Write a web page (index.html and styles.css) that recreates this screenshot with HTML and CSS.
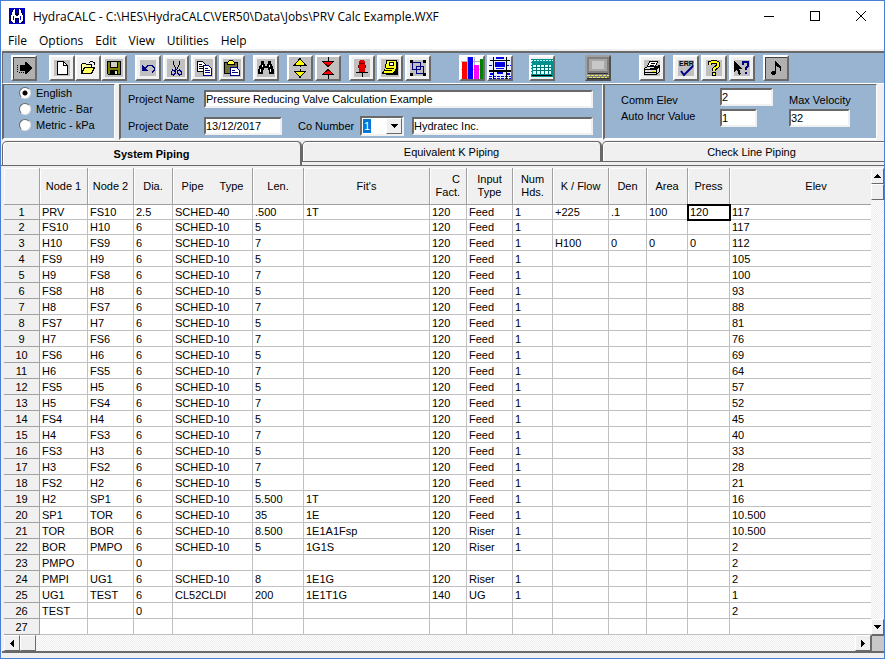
FILE: index.html
```html
<!DOCTYPE html>
<html lang="en">
<head>
    <meta charset="UTF-8">
    <meta name="viewport" content="width=device-width, initial-scale=1.0">
    <title>HydraCALC</title>
    <link rel="stylesheet" href="styles.css">
</head>
<body>
<div class="window">
    <header class="titlebar">
        <svg class="app-icon" viewBox="0 0 16 16"><path fill="#0000c8" d="M0 0h16v16H0z"/><path fill="#000040" d="M4 1h3v4h2V1h3l3 7v5l-2 2H9v-4H7v4H3l-2-2V8z"/><path fill="#fff" d="M5 1h1v5l1 2h2l1-2V1h1l3 7v4l-2 3h-2v-5H6v5H4l-2-3V8z"/><path fill="#0000c8" d="M4 8h1v4H4zM11 8h1v4h-1z"/></svg>
        <span class="title">HydraCALC - C:\HES\HydraCALC\VER50\Data\Jobs\PRV Calc Example.WXF</span>
        <div class="window-buttons">
            <button type="button" aria-label="Minimize"><svg viewBox="0 0 10 10"><path d="M0 5.500h10"/></svg></button>
            <button type="button" aria-label="Maximize"><svg viewBox="0 0 10 10"><path d="M.5.5h9v9h-9z"/></svg></button>
            <button type="button" aria-label="Close"><svg class="smooth" viewBox="0 0 10 10"><path d="M0 0l10 10M10 0L0 10"/></svg></button>
        </div>
    </header>

    <nav class="menu">
        <a href="#">File</a>
        <a href="#">Options</a>
        <a href="#">Edit</a>
        <a href="#">View</a>
        <a href="#">Utilities</a>
        <a href="#">Help</a>
    </nav>

    <div class="toolbar">
        <div class="group">
            <button type="button" class="dark" aria-label="Run"><svg viewBox="0 0 18 18"><path d="M5 6h5V3h1l6 6-6 6h-1v-3H5z"/><path d="M2 6h1v1H2zM2 8h1v1H2zM2 10h1v1H2zM2 12h1v1H2zM4 13h1v1H4zM6 13h1v1H6zM8 13h1v1H8z"/></svg></button>
        </div>
        <div class="group tight space-xs">
            <button type="button" aria-label="New"><svg viewBox="0 0 18 18"><path fill="#c0c0c0" d="M1 1h16v16H1z"/><path fill="#fff" stroke="#000" d="M4.500 2.500h6l4 4v9h-10z"/><path fill="none" stroke="#000" d="M10.500 2.500v4h4"/></svg></button>
            <button type="button" aria-label="Open"><svg viewBox="0 0 18 18"><path fill="#ffffa0" stroke="#000" d="M2.500 14.500v-9l1-1h3l1 1h5v3"/><path fill="#ffff60" stroke="#000" d="M2.500 14.500l3-6h10l-3 6z"/><path fill="none" stroke="#000" d="M10 3.500h1M11 2.500h3M14 3.500h2M15.500 3v3"/></svg></button>
            <button type="button" aria-label="Save"><svg viewBox="0 0 18 18"><path fill="#c0c0c0" d="M0 0h18v18H0z"/><path fill="#808000" stroke="#000" d="M2.500 2.500h13v13h-12l-1-1z"/><path fill="#d0d0c0" stroke="#000" d="M5.500 2.500h7v6h-7z"/><path d="M5 11h8v5H5z"/><path fill="#e0e0e0" d="M10 12h2v3h-2z"/></svg></button>
        </div>
        <div class="group">
            <button type="button" aria-label="Undo"><svg viewBox="0 0 18 18"><path fill="#c0c0c0" d="M1 1h16v16H1z"/><path fill="none" stroke="#000080" d="M6 9.500l3-3h4l2 2v3l-2 2"/><path fill="#000080" d="M3 6v6h6z"/></svg></button>
            <button type="button" aria-label="Cut"><svg viewBox="0 0 18 18"><path fill="#c0c0c0" d="M0 0h18v18H0z"/><path fill="none" stroke="#000" d="M6.500 2v3l2 4M12.500 2v3l-3 6"/><path fill="none" stroke="#000080" d="M8.500 9l2 3 2-1 2 2v2l-2 1-2-2v-2M9.500 10l-2 2-2-1-1 2v2l2 1 2-2v-2"/></svg></button>
            <button type="button" aria-label="Copy"><svg viewBox="0 0 18 18"><path fill="#c0c0c0" d="M0 0h18v18H0z"/><path fill="#fff" stroke="#000" d="M2.500 2.500h5l3 3v7h-8z"/><path stroke="#000" d="M4 5.500h3M4 7.500h4M4 9.500h4"/><path fill="#fff" stroke="#000080" d="M8.500 6.500h5l3 3v7h-8z"/><path stroke="#000080" d="M10 9.500h3M10 11.500h5M10 13.500h5"/></svg></button>
            <button type="button" aria-label="Paste"><svg viewBox="0 0 18 18"><path fill="#c0c0c0" d="M0 0h18v18H0z"/><path fill="#707038" stroke="#000" d="M1.500 3.500h13v11h-13z"/><path fill="#ffff40" stroke="#000" d="M4.500 3.500l2-2h3l2 2v2h-7z"/><path fill="#fff" stroke="#000080" d="M7.500 8.500h6l3 3v5h-9z"/><path stroke="#000080" d="M9 11.500h3M9 13.500h6"/></svg></button>
        </div>
        <div class="group">
            <button type="button" aria-label="Find"><svg viewBox="0 0 18 18"><path fill="#c0c0c0" d="M0 0h18v18H0z"/><path d="M4 2h3v3h1v2h2V5h1V2h3v3l1 1 2 5v4h-5v-4h-1V9H7v2H6v4H1v-4l2-5 1-1z"/><path stroke="#fff" d="M5.500 6v2M3.500 10v3M12.500 6v2M13.500 10v3"/></svg></button>
        </div>
        <div class="group">
            <button type="button" class="gray" aria-label="Expand"><svg viewBox="0 0 18 22"><g fill="#ff0" stroke="#000"><path d="M9 1.500L14.500 8H3.500zM3.500 14h11L9 20.500z"/></g><path stroke="#000" d="M9.500 8v2M9.500 12v2"/></svg></button>
            <button type="button" class="gray" aria-label="Collapse"><svg viewBox="0 0 18 22"><g fill="#f00" stroke="#400"><path d="M3.500 4.500h11l-5.500 5zM9 12.500l5.500 5h-11z"/></g><path stroke="#000" d="M9.500 0v5M9.500 17v5M3 4.500h12M3 17.500h12"/></svg></button>
        </div>
        <div class="group">
            <button type="button" aria-label="Hydrant"><svg viewBox="0 0 18 18"><path fill="#c0c0c0" d="M1 0h16v18H1z"/><path fill="#e00000" d="M7 1h4v1h1v11H6V2h1z"/><path fill="#800000" d="M6 4h6v1H6zM5 6h1v3H5zM12 6h1v3h-1z"/><path stroke="#000" d="M3 13.500h12M9.500 13v5"/></svg></button>
            <button type="button" aria-label="Notes"><svg viewBox="0 0 18 18"><path fill="#c0c0c0" d="M0 0h18v18H0z"/><path d="M15 3h2v13H5v-2h8z"/><path fill="#ffff20" stroke="#000" d="M5.500 1.500h10v8l-3 5h-11l3-5z"/><path fill="#fff" stroke="#000" d="M8.500 3.500h4v3h-4z"/><path stroke="#000" d="M5 9.500h8M4 11.500h7"/></svg></button>
            <button type="button" aria-label="Group"><svg viewBox="0 0 18 18"><path fill="#c0c0c0" d="M1 1h16v16H1z"/><path fill="none" stroke="#000080" d="M3.500 3.500h8v7h-8zM7.500 7.500h7v7h-7z"/><path d="M1 1h3v3H1zM14 1h3v3h-3zM1 14h3v3H1zM14 14h3v3h-3z"/></svg></button>
        </div>
        <div class="group space-lg">
            <button type="button" aria-label="Graph"><svg class="wide" viewBox="0 0 22 22"><path fill="#fff" d="M0 0h22v22H0z"/><path stroke="#b0b0b0" d="M0 4.500h22M0 12.500h22M6.500 0v22M13.500 0v22"/><path fill="#f00" d="M1 5h5v17H1z"/><path fill="#00f" d="M7 0h5v22H7z"/><path fill="#f0f" d="M13 8h5v14h-5z"/><path fill="#008000" d="M19 2h3v20h-3z"/></svg></button>
            <button type="button" aria-label="Pipe plan"><svg class="wide" viewBox="0 0 22 22"><path fill="#e8ecff" d="M0 0h22v22H0z"/><path fill="#0000e0" d="M7 0h8v2H7zM6 5h10v5H6zM7 11h8v1H7zM8 15h6v2H8zM1 16h3v2H1zM18 16h3v2h-3z"/><path stroke="#0000e0" stroke-dasharray="3 1" d="M0 19.500h22M0 21.500h22M0 8.500h5M17 8.500h5"/><path stroke="#000" d="M1 3.500h20M0 13.500h22M0 14.500h22M4.500 0v22M17.500 0v22"/></svg></button>
        </div>
        <div class="group space-sm">
            <button type="button" aria-label="Calculator"><svg class="wide" viewBox="0 0 22 22"><path fill="#009090" d="M0 2h22v18H0z"/><path fill="none" stroke="#c0ffff" stroke-dasharray="2 1" d="M0 3.500h22M.500 3v14"/><path fill="#e0ffff" d="M2 8h18v9H2z"/><path stroke="#007070" d="M2 10.500h18M2 13.500h18M5.500 8v9M9.500 8v9M13.500 8v9M17.500 8v9"/><path stroke="#000" d="M1 18.500h20"/></svg></button>
        </div>
        <div class="group space-xl">
            <button type="button" class="monitor" aria-label="Display"><svg class="wide" viewBox="0 0 22 22"><path fill="#808080" d="M0 0h22v22H0z"/><path fill="#a8a8a8" d="M2 2h18v12H2z"/><path fill="#c8c8c8" d="M5 4h12v8H5z"/><path stroke="#303030" d="M1 16.500h20M0 21.500h22"/><path stroke="#e8e840" stroke-dasharray="3 1" d="M0 18.500h22M2 20.500h18"/></svg></button>
        </div>
        <div class="group space-lg">
            <button type="button" aria-label="Print"><svg viewBox="0 0 18 18"><path fill="#c0c0c0" d="M1 1h16v16H1z"/><path fill="#fff" stroke="#000" d="M6.500 2.500h8l-2 5h-8z"/><path stroke="#000" d="M8 4.500h4M7 6.500h4"/><path fill="#e0e0e0" stroke="#000" d="M1.500 9.500l3-2h10l2-1v6l-3 3h-12z"/><path stroke="#000" d="M2 10.500h11l3-3M2 13.500h11M13.500 10v5"/><path stroke="#e0e000" d="M9 12h3"/></svg></button>
        </div>
        <div class="group">
            <button type="button" aria-label="Check errors"><svg viewBox="0 0 18 18"><path fill="#c0c0c0" d="M1 1h16v16H1z"/><text class="err" x="2" y="7">ERR</text><path class="smooth" fill="none" stroke="#000080" stroke-width="2" d="M4 12l3 4 9-9"/></svg></button>
            <button type="button" aria-label="Help"><svg viewBox="0 0 18 18"><path fill="#c0c0c0" d="M1 1h16v16H1z"/><path fill="none" stroke="#000" stroke-width="4" d="M5 6V4l2-1h4l2 1v3l-4 3v2M9 13v4"/><path fill="none" stroke="#ff0" stroke-width="2" d="M5 6V4l2-1h4l2 1v3l-4 3v2M9 14v2"/></svg></button>
            <button type="button" aria-label="What's this"><svg viewBox="0 0 18 18"><path fill="#c0c0c0" d="M1 1h16v16H1z"/><path d="M1 2l8 8H6l2 5-2 1-2-5-3 2z"/><path fill="none" stroke="#000080" stroke-width="2" d="M10 6V3h5v4l-2 2v2M13 13v2"/></svg></button>
        </div>
        <div class="group">
            <button type="button" class="dark" aria-label="Sound"><svg viewBox="0 0 18 18"><path d="M8 2h1l1 2 4 4v4h-1V9L9 7v7l-2 2H5l-1-1v-2l1-1h3z"/></svg></button>
        </div>
    </div>

    <form class="project">
        <fieldset class="panel units">
            <label><input type="radio" name="units" checked> English</label>
            <label><input type="radio" name="units"> Metric - Bar</label>
            <label><input type="radio" name="units"> Metric - kPa</label>
        </fieldset>

        <div class="panel details">
            <div class="field-row">
                <label class="first" for="projectName">Project Name</label>
                <input type="text" id="projectName" class="grow" value="Pressure Reducing Valve Calculation Example">
            </div>
            <div class="field-row">
                <label class="first" for="projectDate">Project Date</label>
                <input type="text" id="projectDate" class="date" value="13/12/2017">
                <label class="co-label" for="coNumber">Co Number</label>
                <span class="combo">
                    <select id="coNumber"><option>1</option><option>2</option></select>
                    <svg viewBox="0 0 7 4"><path d="M0 0h7v1H6v1H5v1H4v1H3V3H2V2H1V1H0z"/></svg>
                </span>
                <input type="text" class="grow company" aria-label="Company" value="Hydratec Inc.">
            </div>
        </div>

        <div class="panel settings">
            <div class="labels">
                <label for="commElev">Comm Elev</label>
                <label for="autoIncr">Auto Incr Value</label>
            </div>
            <div class="values">
                <input type="text" id="commElev" value="2">
                <input type="text" id="autoIncr" class="short" value="1">
            </div>
            <div class="velocity">
                <label for="maxVelocity">Max Velocity</label>
                <input type="text" id="maxVelocity" value="32">
            </div>
        </div>
    </form>

    <div class="tabs" role="tablist">
        <button type="button" role="tab" class="active" aria-selected="true">System Piping</button>
        <button type="button" role="tab">Equivalent K Piping</button>
        <button type="button" role="tab">Check Line Piping</button>
    </div>

    <main class="sheet">
        <table>
            <colgroup>
                <col class="c-num"><col class="c-n1"><col class="c-n2"><col class="c-dia"><col class="c-type">
                <col class="c-len"><col class="c-fits"><col class="c-fact"><col class="c-input"><col class="c-hds">
                <col class="c-flow"><col class="c-den"><col class="c-area"><col class="c-press"><col>
            </colgroup>
            <thead>
                <tr><th></th><th>Node 1</th><th>Node 2</th><th>Dia.</th><th><span class="pipe">Pipe</span>Type</th><th>Len.</th><th>Fit's</th><th class="right">C<br>Fact.</th><th>Input<br>Type</th><th>Num<br>Hds.</th><th>K / Flow</th><th>Den</th><th>Area</th><th>Press</th><th class="elev">Elev</th></tr>
            </thead>
            <tbody>
                <tr><th>1</th><td>PRV</td><td>FS10</td><td>2.5</td><td>SCHED-40</td><td>.500</td><td>1T</td><td>120</td><td>Feed</td><td>1</td><td>+225</td><td>.1</td><td>100</td><td class="current">120</td><td>117</td></tr>
                <tr><th>2</th><td>FS10</td><td>H10</td><td>6</td><td>SCHED-10</td><td>5</td><td></td><td>120</td><td>Feed</td><td>1</td><td></td><td></td><td></td><td></td><td>117</td></tr>
                <tr><th>3</th><td>H10</td><td>FS9</td><td>6</td><td>SCHED-10</td><td>7</td><td></td><td>120</td><td>Feed</td><td>1</td><td>H100</td><td>0</td><td>0</td><td>0</td><td>112</td></tr>
                <tr><th>4</th><td>FS9</td><td>H9</td><td>6</td><td>SCHED-10</td><td>5</td><td></td><td>120</td><td>Feed</td><td>1</td><td></td><td></td><td></td><td></td><td>105</td></tr>
                <tr><th>5</th><td>H9</td><td>FS8</td><td>6</td><td>SCHED-10</td><td>7</td><td></td><td>120</td><td>Feed</td><td>1</td><td></td><td></td><td></td><td></td><td>100</td></tr>
                <tr><th>6</th><td>FS8</td><td>H8</td><td>6</td><td>SCHED-10</td><td>5</td><td></td><td>120</td><td>Feed</td><td>1</td><td></td><td></td><td></td><td></td><td>93</td></tr>
                <tr><th>7</th><td>H8</td><td>FS7</td><td>6</td><td>SCHED-10</td><td>7</td><td></td><td>120</td><td>Feed</td><td>1</td><td></td><td></td><td></td><td></td><td>88</td></tr>
                <tr><th>8</th><td>FS7</td><td>H7</td><td>6</td><td>SCHED-10</td><td>5</td><td></td><td>120</td><td>Feed</td><td>1</td><td></td><td></td><td></td><td></td><td>81</td></tr>
                <tr><th>9</th><td>H7</td><td>FS6</td><td>6</td><td>SCHED-10</td><td>7</td><td></td><td>120</td><td>Feed</td><td>1</td><td></td><td></td><td></td><td></td><td>76</td></tr>
                <tr><th>10</th><td>FS6</td><td>H6</td><td>6</td><td>SCHED-10</td><td>5</td><td></td><td>120</td><td>Feed</td><td>1</td><td></td><td></td><td></td><td></td><td>69</td></tr>
                <tr><th>11</th><td>H6</td><td>FS5</td><td>6</td><td>SCHED-10</td><td>7</td><td></td><td>120</td><td>Feed</td><td>1</td><td></td><td></td><td></td><td></td><td>64</td></tr>
                <tr><th>12</th><td>FS5</td><td>H5</td><td>6</td><td>SCHED-10</td><td>5</td><td></td><td>120</td><td>Feed</td><td>1</td><td></td><td></td><td></td><td></td><td>57</td></tr>
                <tr><th>13</th><td>H5</td><td>FS4</td><td>6</td><td>SCHED-10</td><td>7</td><td></td><td>120</td><td>Feed</td><td>1</td><td></td><td></td><td></td><td></td><td>52</td></tr>
                <tr><th>14</th><td>FS4</td><td>H4</td><td>6</td><td>SCHED-10</td><td>5</td><td></td><td>120</td><td>Feed</td><td>1</td><td></td><td></td><td></td><td></td><td>45</td></tr>
                <tr><th>15</th><td>H4</td><td>FS3</td><td>6</td><td>SCHED-10</td><td>7</td><td></td><td>120</td><td>Feed</td><td>1</td><td></td><td></td><td></td><td></td><td>40</td></tr>
                <tr><th>16</th><td>FS3</td><td>H3</td><td>6</td><td>SCHED-10</td><td>5</td><td></td><td>120</td><td>Feed</td><td>1</td><td></td><td></td><td></td><td></td><td>33</td></tr>
                <tr><th>17</th><td>H3</td><td>FS2</td><td>6</td><td>SCHED-10</td><td>7</td><td></td><td>120</td><td>Feed</td><td>1</td><td></td><td></td><td></td><td></td><td>28</td></tr>
                <tr><th>18</th><td>FS2</td><td>H2</td><td>6</td><td>SCHED-10</td><td>5</td><td></td><td>120</td><td>Feed</td><td>1</td><td></td><td></td><td></td><td></td><td>21</td></tr>
                <tr><th>19</th><td>H2</td><td>SP1</td><td>6</td><td>SCHED-10</td><td>5.500</td><td>1T</td><td>120</td><td>Feed</td><td>1</td><td></td><td></td><td></td><td></td><td>16</td></tr>
                <tr><th>20</th><td>SP1</td><td>TOR</td><td>6</td><td>SCHED-10</td><td>35</td><td>1E</td><td>120</td><td>Feed</td><td>1</td><td></td><td></td><td></td><td></td><td>10.500</td></tr>
                <tr><th>21</th><td>TOR</td><td>BOR</td><td>6</td><td>SCHED-10</td><td>8.500</td><td>1E1A1Fsp</td><td>120</td><td>Riser</td><td>1</td><td></td><td></td><td></td><td></td><td>10.500</td></tr>
                <tr><th>22</th><td>BOR</td><td>PMPO</td><td>6</td><td>SCHED-10</td><td>5</td><td>1G1S</td><td>120</td><td>Riser</td><td>1</td><td></td><td></td><td></td><td></td><td>2</td></tr>
                <tr><th>23</th><td>PMPO</td><td></td><td>0</td><td></td><td></td><td></td><td></td><td></td><td></td><td></td><td></td><td></td><td></td><td>2</td></tr>
                <tr><th>24</th><td>PMPI</td><td>UG1</td><td>6</td><td>SCHED-10</td><td>8</td><td>1E1G</td><td>120</td><td>Riser</td><td>1</td><td></td><td></td><td></td><td></td><td>2</td></tr>
                <tr><th>25</th><td>UG1</td><td>TEST</td><td>6</td><td>CL52CLDI</td><td>200</td><td>1E1T1G</td><td>140</td><td>UG</td><td>1</td><td></td><td></td><td></td><td></td><td>1</td></tr>
                <tr><th>26</th><td>TEST</td><td></td><td>0</td><td></td><td></td><td></td><td></td><td></td><td></td><td></td><td></td><td></td><td></td><td>2</td></tr>
                <tr><th>27</th><td></td><td></td><td></td><td></td><td></td><td></td><td></td><td></td><td></td><td></td><td></td><td></td><td></td><td></td></tr>
            </tbody>
        </table>
        <div class="scroll vertical">
            <button type="button" aria-label="Scroll up"><svg viewBox="0 0 7 4"><path d="M3 0h1v1h1v1h1v1h1v1H0V3h1V2h1V1h1z"/></svg></button>
            <div class="thumb"></div>
            <button type="button" class="last" aria-label="Scroll down"><svg viewBox="0 0 7 4"><path d="M0 0h7v1H6v1H5v1H4v1H3V3H2V2H1V1H0z"/></svg></button>
        </div>
        <div class="scroll horizontal">
            <button type="button" aria-label="Scroll left"><svg class="side" viewBox="0 0 4 7"><path d="M4 0v7H3V6H2V5H1V4H0V3h1V2h1V1h1V0z"/></svg></button>
            <div class="thumb"></div>
            <button type="button" class="last" aria-label="Scroll right"><svg class="side" viewBox="0 0 4 7"><path d="M0 0v7h1V6h1V5h1V4h1V3H3V2H2V1H1V0z"/></svg></button>
        </div>
        <div class="corner"></div>
    </main>
</div>
</body>
</html>
```

FILE: styles.css
```css
* {
    box-sizing: border-box;
}
body {
    margin: 0;
    font-family: "Liberation Sans", Arial, sans-serif;
    font-size: 11px;
    color: #000;
    background: #f0f0f0;
}
button, input, select {
    font: inherit;
    color: inherit;
    margin: 0;
    padding: 0;
    border-radius: 0;
}
svg {
    display: block;
    shape-rendering: crispEdges;
}
svg.smooth, .smooth {
    shape-rendering: auto;
}
.window {
    min-height: 100vh;
    border: 1px solid #4a7fd8;
    background: #f0f0f0;
    overflow: hidden;
}

/* title bar and menu */
.titlebar {
    display: flex;
    align-items: center;
    height: 30px;
    padding-left: 8px;
    background: #fff;
    font-family: "Open Sans", "Noto Sans", sans-serif;
    font-size: 12px;
}
.app-icon {
    width: 16px;
    height: 16px;
    margin-right: 8px;
}
.title {
    flex: 1;
    white-space: nowrap;
}
.window-buttons {
    display: flex;
}
.window-buttons button {
    display: flex;
    align-items: center;
    justify-content: center;
    width: 46px;
    height: 28px;
    border: 0;
    background: none;
}
.window-buttons svg {
    width: 10px;
    height: 10px;
    fill: none;
    stroke: #000;
}
.menu {
    display: flex;
    gap: 12px;
    height: 18px;
    padding-left: 7px;
    background: #fff;
    font-family: "Open Sans", "Noto Sans", sans-serif;
    font-size: 12px;
    line-height: 20px;
}
.menu a {
    color: #000;
    text-decoration: none;
}

/* toolbar */
.toolbar {
    display: flex;
    gap: 8px;
    margin: 2px 0 0 1px;
    padding: 2px 0 2px 8px;
    border-top: 2px solid #696969;
    border-left: 1px solid #696969;
    border-bottom: 1px solid #fff;
    background: #99b4d1;
}
.group {
    display: flex;
    gap: 2px;
}
.group.tight {
    gap: 0;
}
.space-xs {
    margin-left: 4px;
}
.space-sm {
    margin-left: 8px;
}
.space-lg {
    margin-left: 20px;
}
.space-xl {
    margin-left: 22px;
}
.toolbar button {
    display: flex;
    align-items: center;
    justify-content: center;
    width: 26px;
    height: 26px;
    border: 2px solid;
    border-color: #fff #696969 #696969 #fff;
    background: #f0f0f0;
}
.toolbar svg {
    width: 18px;
    height: 22px;
}
.toolbar svg.wide {
    width: 22px;
    height: 22px;
}
.toolbar .gray {
    background: #c0c0c0;
}
.toolbar .dark {
    background: #b0b0b0;
    box-shadow: inset 1px 1px #404040;
}
.toolbar .monitor {
    background: #808080;
    border-color: #a0a0a0 #505050 #505050 #a0a0a0;
}
.err {
    font-size: 7px;
    font-weight: bold;
}

/* project form */
.project {
    display: flex;
    height: 56px;
    padding: 0 7px 0 1px;
}
.panel {
    margin: 0;
    border: 1px solid;
    border-color: #696969 #fff #fff #696969;
    border-width: 1px 1px 2px 2px;
    background: #99b4d1;
}
.units {
    width: 113px;
    min-width: 0;
    padding: 0 0 0 15px;
    margin-right: 4px;
}
.units label {
    display: flex;
    align-items: center;
    height: 16px;
}
.units input {
    appearance: none;
    width: 12px;
    height: 12px;
    margin-right: 5px;
    border: 1px solid;
    border-color: #696969 #e3e3e3 #e3e3e3 #696969;
    border-radius: 50%;
    background: #fff;
}
.units input:checked {
    background: radial-gradient(circle, #000 0 2px, #fff 3px);
}
.details {
    flex: 1;
    padding: 5px 9px 0 7px;
}
.field-row {
    display: flex;
    align-items: center;
    height: 18px;
    margin-bottom: 9px;
}
.first {
    width: 76px;
}
input[type="text"] {
    height: 18px;
    min-width: 0;
    padding-left: 0;
    border: 2px solid;
    border-color: #696969 #f0f0f0 #f0f0f0 #696969;
    background: #fff;
}
.grow {
    flex: 1;
}
.date {
    width: 78px;
}
.co-label {
    width: 62px;
    margin-left: 16px;
}
.combo {
    position: relative;
    width: 44px;
    height: 20px;
}
.combo select {
    appearance: none;
    width: 100%;
    height: 100%;
    padding-left: 2px;
    border: 2px solid;
    border-color: #696969 #f0f0f0 #f0f0f0 #696969;
    color: #fff;
    background: linear-gradient(#0078d7, #0078d7) 1px 1px / 8px 14px no-repeat #fff;
}
.combo option {
    color: #000;
}
.combo svg {
    position: absolute;
    top: 2px;
    right: 2px;
    width: 16px;
    height: 16px;
    padding: 5px 3px;
    border: 1px solid;
    border-color: #fff #696969 #696969 #fff;
    background: #f0f0f0;
    pointer-events: none;
}
.company {
    margin-left: 8px;
}
.settings {
    display: flex;
    width: 274px;
    padding: 3px 0 0 16px;
}
.labels {
    display: flex;
    flex-direction: column;
    width: 99px;
    padding-top: 4px;
    line-height: 16px;
}
.values {
    display: flex;
    flex-direction: column;
    gap: 3px;
    width: 69px;
}
.values input {
    width: 53px;
}
.values .short {
    width: 37px;
}
.velocity {
    display: flex;
    flex-direction: column;
    width: 70px;
    padding-top: 4px;
    line-height: 16px;
}
.velocity input {
    width: 61px;
    margin-top: 1px;
}

/* tabs, the last one runs past the window edge */
.tabs {
    display: flex;
    height: 26px;
    margin-right: -18px;
    padding: 1px 0 0 1px;
    border-bottom: 1px solid #696969;
}
.tabs button {
    flex: 1;
    height: 21px;
    border: 1px solid #696969;
    border-right-width: 2px;
    border-radius: 5px 5px 0 0;
    background: #f0f0f0;
    box-shadow: inset 1px 1px #fff;
}
.tabs .active {
    height: 24px;
    border-bottom: 0;
    font-weight: bold;
}

/* pipe grid */
.sheet {
    display: grid;
    grid-template-columns: 1fr 13px;
    margin: 0 0 0 1px;
    padding: 2px 0 0 2px;
    border-bottom: 2px solid #696969;
}
table {
    width: 100%;
    table-layout: fixed;
    border-collapse: separate;
    border-spacing: 0;
    background: #fff;
}
.c-num { width: 36px; }
.c-n1 { width: 48px; }
.c-n2 { width: 46px; }
.c-dia { width: 39px; }
.c-type { width: 80px; }
.c-len { width: 51px; }
.c-fits { width: 126px; }
.c-fact { width: 37px; }
.c-input { width: 46px; }
.c-hds { width: 40px; }
.c-flow { width: 56px; }
.c-den { width: 38px; }
.c-area { width: 41px; }
.c-press { width: 42px; }
th {
    padding: 0;
    border-right: 1px solid #a0a0a0;
    border-bottom: 1px solid #a0a0a0;
    background: #f0f0f0;
    font-weight: normal;
}
thead th {
    height: 37px;
    line-height: 13px;
    box-shadow: inset 1px 1px #fff;
}
thead .right {
    padding-right: 6px;
    text-align: right;
}
thead .elev {
    padding-left: 31px;
    border-right: 0;
}
.pipe {
    margin-right: 16px;
}
td {
    padding: 0 0 0 2px;
    border-right: 1px solid #c0c0c0;
    border-bottom: 1px solid #c0c0c0;
    white-space: nowrap;
}
td:last-child {
    border-right: 0;
}
tbody tr {
    height: 16px;
    line-height: 14px;
}
tbody tr:nth-child(-n+2) {
    height: 15px;
}
.current {
    outline: 2px solid #000;
    outline-offset: -1px;
}

/* scroll bars */
.scroll {
    display: flex;
    background: repeating-conic-gradient(#fff 0 25%, #ececec 0 50%) 0 0 / 2px 2px;
}
.vertical {
    flex-direction: column;
}
.scroll button, .thumb {
    display: flex;
    align-items: center;
    justify-content: center;
    width: 16px;
    height: 16px;
    border: 1px solid;
    border-color: #fff #696969 #696969 #fff;
    background: #f0f0f0;
}
.vertical button, .vertical .thumb {
    width: 13px;
}
.scroll svg {
    width: 7px;
    height: 4px;
}
.scroll svg.side {
    width: 4px;
    height: 7px;
}
.vertical .last {
    margin-top: auto;
}
.horizontal .last {
    margin-left: auto;
}
.corner {
    border: 1px solid #696969;
    border-width: 1px 0 0 1px;
    background: #c8c8c8;
}
```
